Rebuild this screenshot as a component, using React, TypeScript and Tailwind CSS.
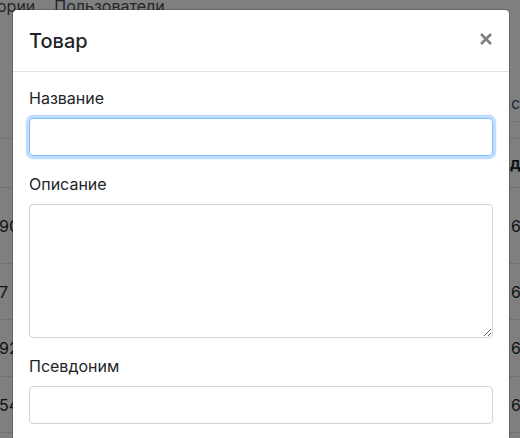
import React from "react";

const rows = [
  { h: "h-[76px]", l: "9078", r: "6" },
  { h: "h-[56px]", l: "7", r: "6" },
  { h: "h-[57px]", l: "92", r: "6" },
  { h: "h-[56px]", l: "54", r: "6" },
];

export default function App() {
  return (
    <div className="relative w-[520px] h-[438px] overflow-hidden bg-white font-['Inter',sans-serif] text-[#212529]">
      {/* background page */}
      <div className="flex flex-col">
        <div className="flex h-[24px] -mt-[6px] text-[16px] leading-6 text-[#495057] whitespace-nowrap">
          <span className="-ml-[3px]">ории</span>
          <span className="ml-[19px]">Пользователи</span>
        </div>
        <div className="flex justify-end h-[104px]">
          <div className="w-[10px] flex items-end border-b border-[#dee2e6] overflow-hidden">
            <span className="pl-px text-[16px] leading-6 mb-[6px] text-[#495057]">с</span>
          </div>
        </div>
        <div className="h-[16px]" />
        <div className="flex items-center justify-end h-[49px] border-t border-[#dee2e6] whitespace-nowrap">
          <div className="w-[10px] overflow-hidden">
            <span className="font-bold">да</span>
          </div>
        </div>
        {rows.map((r, i) => (
          <div
            key={i}
            className={`flex items-center justify-between ${r.h} border-t border-[#dee2e6] whitespace-nowrap`}
          >
            <span className="-ml-[1px]">{r.l}</span>
            <div className="w-[10px] overflow-hidden">
              <span className="pl-px">{r.r}</span>
            </div>
          </div>
        ))}
        <div className="h-[20px] border-t border-[#dee2e6]" />
      </div>

      {/* backdrop */}
      <div className="absolute inset-0 bg-black/50" />

      {/* modal */}
      <div className="absolute left-[12px] top-[9px] w-[498px] bg-white bg-clip-padding border border-black/20 rounded-[5px]">
        <div className="flex items-start justify-between px-4 pt-4 pb-[15px] border-b border-[#dee2e6]">
          <h5 className="text-[20px] leading-[30px] font-medium">Товар</h5>
          <button className="mt-[7px] mr-[1px] text-black/50">
            <svg width="12" height="12" viewBox="0 0 12 12">
              <path d="M1 1 L11 11 M11 1 L1 11" stroke="currentColor" strokeWidth="2.6" />
            </svg>
          </button>
        </div>
        <div className="px-4 pt-[14px] pb-4">
          <div className="mb-4">
            <label className="block mb-2 text-[16px] leading-6">Название</label>
            <input
              className="block w-full h-[38px] px-3 rounded-[4px] border border-[#80bdff] shadow-[0_0_0_3.2px_rgba(0,123,255,0.25)] outline-none"
              type="text"
            />
          </div>
          <div className="mb-4">
            <label className="block mb-2 text-[16px] leading-6">Описание</label>
            <textarea
              className="block w-full h-[134px] px-3 py-1.5 rounded-[4px] border border-[#ced4da] outline-none resize-y"
            />
          </div>
          <div className="mb-4">
            <label className="block mb-2 text-[16px] leading-6">Псевдоним</label>
            <input
              className="block w-full h-[38px] px-3 rounded-[4px] border border-[#ced4da] outline-none"
              type="text"
            />
          </div>
        </div>
      </div>
    </div>
  );
}
